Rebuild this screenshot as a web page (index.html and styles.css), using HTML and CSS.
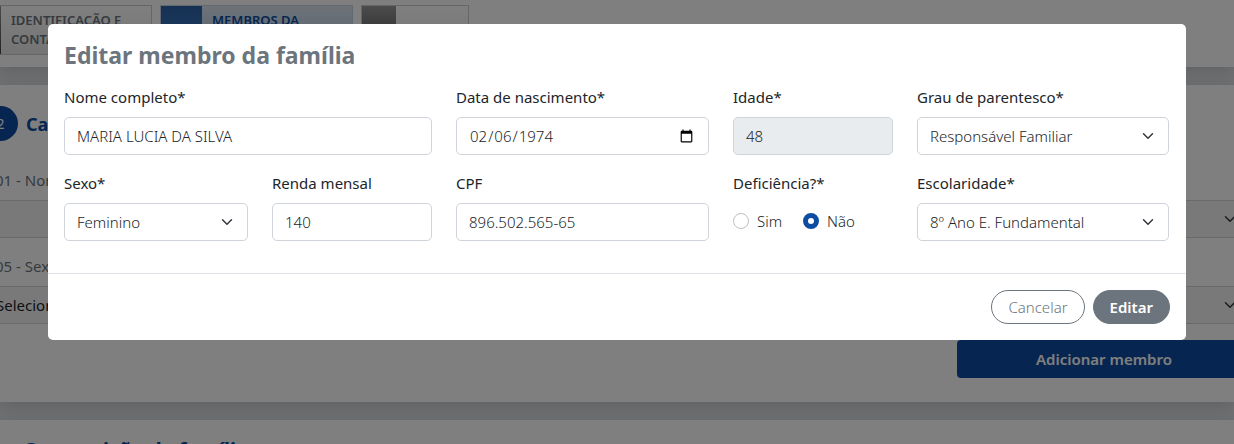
FILE: index.html
```html
<!DOCTYPE html>
<html lang="pt-BR">
<head>
<meta charset="utf-8">
<meta name="viewport" content="width=device-width, initial-scale=1">
<title>Editar membro da família</title>
<link rel="stylesheet" href="styles.css">
</head>
<body>
<div class="page" aria-hidden="true">
  <nav class="steps">
    <div class="step step-first"><span class="step-number"></span><span class="step-text">IDENTIFICAÇÃO E CONTATO</span></div>
    <div class="step step-active"><span class="step-number"></span><span class="step-text">MEMBROS DA FAMÍLIA</span></div>
    <div class="step step-last"><span class="step-number"></span><span class="step-text"></span></div>
  </nav>
  <section class="card">
    <h2 class="card-title"><span class="badge">2</span>Cadastro</h2>
    <label class="bg-label" for="bg-nome">01 - Nome</label>
    <select class="select bg-control" id="bg-nome" tabindex="-1"><option></option></select>
    <label class="bg-label" for="bg-sexo">05 - Sexo</label>
    <select class="select bg-control" id="bg-sexo" tabindex="-1"><option>Selecione</option></select>
    <button class="add-button" type="button" tabindex="-1">Adicionar membro</button>
  </section>
  <section class="card card-next">
    <h2 class="section-title">Composição da família</h2>
  </section>
</div>

<div class="backdrop">
  <form class="modal" role="dialog" aria-modal="true" aria-labelledby="modal-title">
    <div class="modal-body">
      <h1 class="modal-title" id="modal-title">Editar membro da família</h1>
      <div class="fields">
        <div class="field field-wide">
          <label for="nome">Nome completo*</label>
          <input class="control" id="nome" type="text" value="MARIA LUCIA DA SILVA">
        </div>
        <div class="field">
          <label for="nascimento">Data de nascimento*</label>
          <input class="control" id="nascimento" type="date" value="1974-02-06">
        </div>
        <div class="field">
          <label for="idade">Idade*</label>
          <input class="control" id="idade" type="text" value="48" disabled>
        </div>
        <div class="field">
          <label for="parentesco">Grau de parentesco*</label>
          <select class="control select" id="parentesco"><option>Responsável Familiar</option></select>
        </div>
        <div class="field">
          <label for="sexo">Sexo*</label>
          <select class="control select" id="sexo"><option>Feminino</option></select>
        </div>
        <div class="field">
          <label for="renda">Renda mensal</label>
          <input class="control" id="renda" type="text" value="140">
        </div>
        <div class="field">
          <label for="cpf">CPF</label>
          <input class="control" id="cpf" type="text" value="896.502.565-65">
        </div>
        <fieldset class="field">
          <legend>Deficiência?*</legend>
          <div class="radios">
            <label class="radio"><input type="radio" name="deficiencia">Sim</label>
            <label class="radio"><input type="radio" name="deficiencia" checked>Não</label>
          </div>
        </fieldset>
        <div class="field">
          <label for="escolaridade">Escolaridade*</label>
          <select class="control select" id="escolaridade"><option>8º Ano E. Fundamental</option></select>
        </div>
      </div>
    </div>
    <div class="modal-footer">
      <button class="button button-outline" type="button">Cancelar</button>
      <button class="button button-solid" type="submit">Editar</button>
    </div>
  </form>
</div>
</body>
</html>
```
FILE: styles.css
```css
* { box-sizing: border-box; }

body {
  margin: 0;
  height: 100vh;
  overflow: hidden;
  background: #fff;
  color: #212529;
  font-family: "Noto Sans", "Open Sans", sans-serif;
  font-size: 15px;
  line-height: 24px;
}

input, select, button { font: inherit; color: inherit; }

.page {
  height: 100vh;
  overflow: hidden;
  background: #dee2e6;
}

.steps {
  display: flex;
  gap: 8px;
  padding: 5px 0 12px;
  background: #fff;
  box-shadow: 0 4px 16px rgba(0, 0, 0, .15);
}

.step {
  display: flex;
  height: 50px;
  border: 1px solid #ccc;
  background: linear-gradient(#fff, #e8e8e8);
  color: #6c757d;
  font-size: 13px;
  font-weight: 600;
  line-height: 19px;
}

.step-first { width: 152px; border-left: 0; }
.step-active { width: 193px; color: #0c4da2; background: linear-gradient(#dce6f2, #aabfd8); border-color: #c5d3e3; }
.step-last { width: 108px; }

.step-number { width: 34px; background: linear-gradient(#999, #444); }
.step-first .step-number { width: 1px; }
.step-active .step-number { width: 41px; background: linear-gradient(#2c62a8, #3d7cc4); }
.step-text { flex: 1; padding: 5px 10px; }

.card {
  margin-top: 18px;
  padding: 21px 0 24px;
  background: #fff;
  box-shadow: 0 4px 16px rgba(0, 0, 0, .15);
}

.card > * { margin-left: -17px; margin-right: -17px; }

.card-next { padding-top: 18px; }

.card-title {
  display: flex;
  align-items: center;
  gap: 8px;
  margin-top: 0;
  margin-bottom: 27px;
  color: #0c4da2;
  font-size: 18px;
}

.badge {
  width: 35px;
  height: 35px;
  border-radius: 50%;
  background: #0c4da2;
  color: #fff;
  font-size: 14px;
  font-weight: 400;
  line-height: 35px;
  text-align: center;
}

.bg-label {
  display: block;
  padding: 0 12px;
  color: #6c757d;
}

.select {
  appearance: none;
  background-image: url("data:image/svg+xml,%3Csvg xmlns='http://www.w3.org/2000/svg' viewBox='0 0 16 16'%3E%3Cpath fill='none' stroke='%23343a40' stroke-linecap='round' stroke-linejoin='round' stroke-width='2' d='m2 5 6 6 6-6'/%3E%3C/svg%3E");
  background-repeat: no-repeat;
  background-position: right 13px center;
  background-size: 14px 12px;
}

.bg-control {
  display: block;
  width: calc(100% + 34px);
  height: 38px;
  margin-top: 8px;
  margin-bottom: 16px;
  padding: 6px 12px;
  border: 1px solid #ced4da;
  background-color: #f2f2f2;
}

.add-button {
  display: block;
  width: 294px;
  height: 38px;
  margin-left: auto;
  border: 0;
  border-radius: 4px;
  background-color: #0c4da2;
  color: #fff;
  font-weight: 600;
}

.section-title {
  margin-top: 0;
  margin-bottom: 0;
  padding-left: 40px;
  color: #0c4da2;
  font-size: 20px;
}

.backdrop {
  position: fixed;
  inset: 0;
  padding: 24px 48px;
  background: rgba(0, 0, 0, .5);
}

.modal {
  max-width: 1140px;
  margin: 0 auto;
  border-radius: 5px;
  background: #fff;
}

.modal-body { padding: 16px 17px 32px 16px; }

.modal-title {
  margin: 0 0 15px;
  color: #6c757d;
  font-size: 23px;
  font-weight: 700;
  line-height: 30px;
}

.fields {
  display: grid;
  grid-template-columns: 184fr 160fr 253fr 160fr 252fr;
  gap: 16px 24px;
}

.field {
  display: flex;
  flex-direction: column;
  gap: 8px;
  min-width: 0;
  margin: 0;
  padding: 0;
  border: 0;
}

.field-wide { grid-column: span 2; }

legend { padding: 0; margin-bottom: 8px; }

.control {
  width: 100%;
  height: 38px;
  padding: 6px 12px;
  border: 1px solid #ced4da;
  border-radius: 5px;
  background-color: #fff;
  font-weight: 300;
}

.control:disabled { background-color: #e9ecef; opacity: 1; }

.radios {
  display: flex;
  align-items: center;
  gap: 21px;
  height: 36px;
}

.radio {
  display: flex;
  align-items: center;
  gap: 8px;
  font-weight: 300;
}

.radio input {
  appearance: none;
  width: 16px;
  height: 16px;
  margin: 0;
  border: 1px solid #bfbfbf;
  border-radius: 50%;
  background: #fff;
}

.radio input:checked { border: 5px solid #0c4da2; }

.modal-footer {
  display: flex;
  justify-content: flex-end;
  gap: 8px;
  padding: 16px;
  border-top: 1px solid #dee2e6;
}

.button {
  height: 34px;
  padding: 0 16px;
  border: 1px solid #6c757d;
  border-radius: 17px;
}

.button-outline { background: #fff; color: #6c757d; font-weight: 300; }
.button-solid { background: #6c757d; color: #fff; font-weight: 600; }
```
